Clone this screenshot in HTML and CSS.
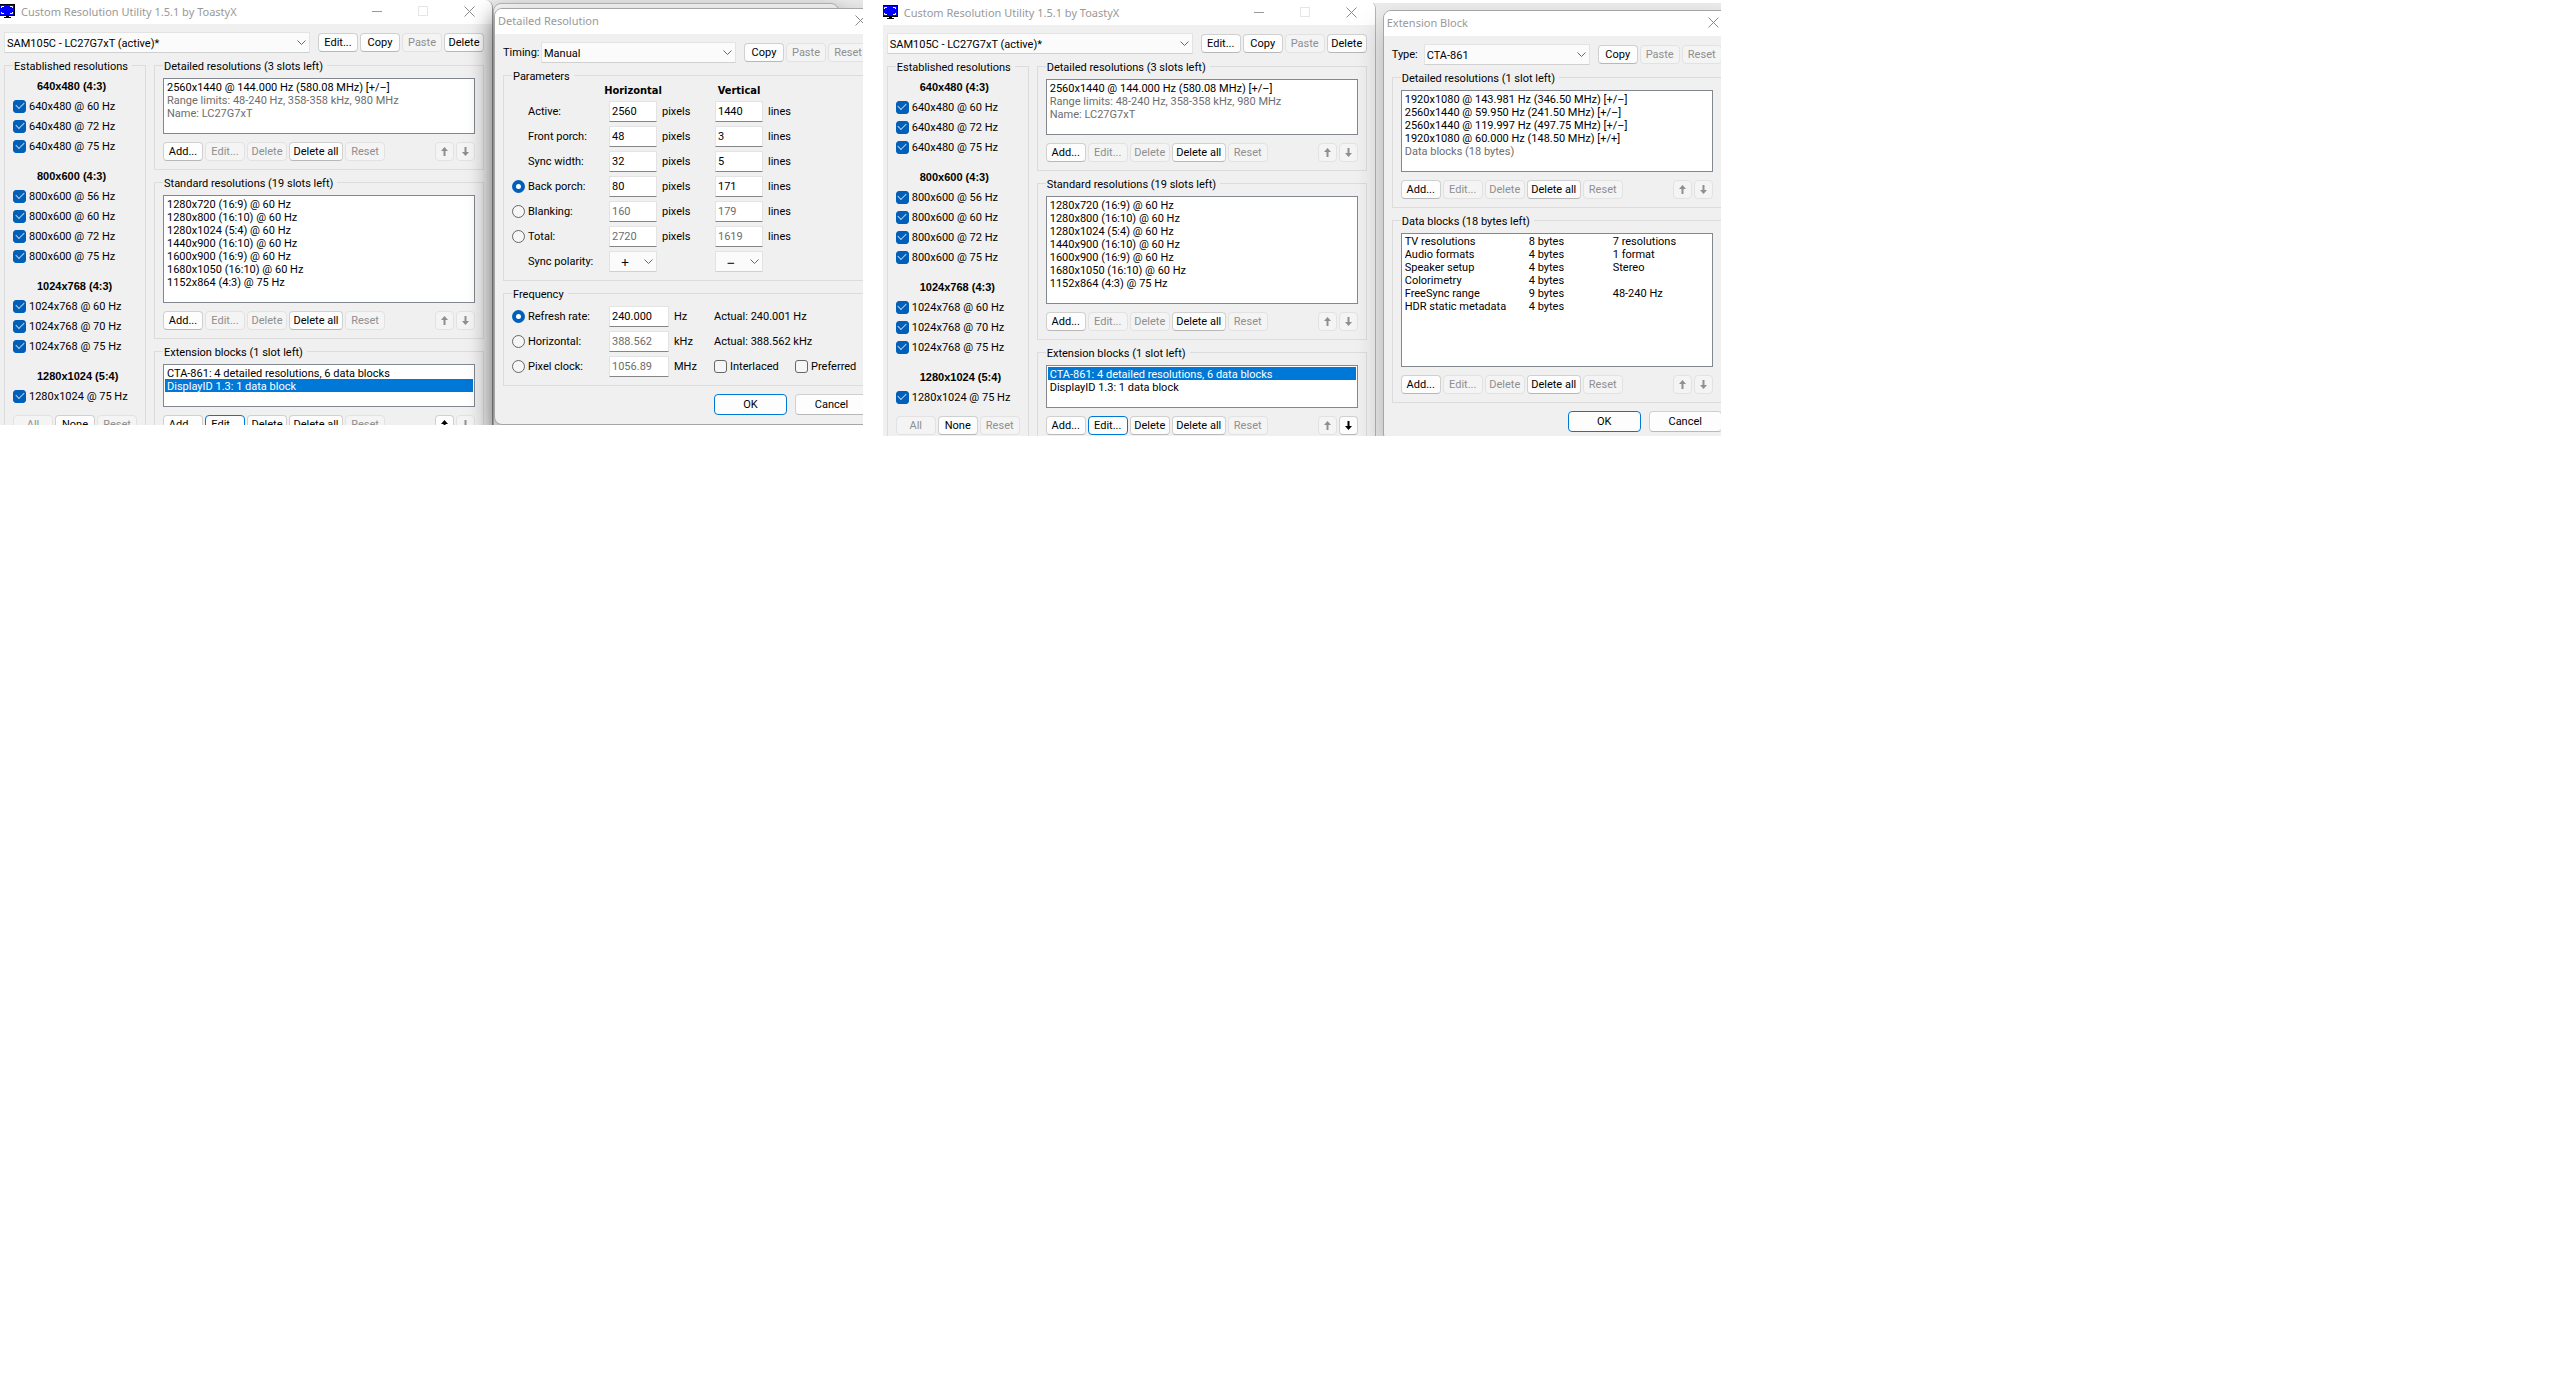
FILE: index.html
```html
<!DOCTYPE html>
<html lang="en">
<head>
    <meta charset="UTF-8">
    <meta name="viewport" content="width=device-width, initial-scale=1.0">
    <title>Custom Resolution Utility</title>
    <link rel="stylesheet" href="styles.css">
</head>
<body>
    <!-- shared icons -->
    <svg class="defs" aria-hidden="true">
        <symbol id="monitor" viewBox="0 0 15 14">
            <rect width="15" height="12" fill="#000"/>
            <rect x="0" y="1" width="14" height="10" fill="#00f"/>
            <path d="M1.500 4V2.500H4M10 2.500h2.500V4M1.500 8v1.500H4M10 9.500h2.500V8" fill="none" stroke="#fff"/>
            <path d="M6 12h3v1h2v1H4v-1h2z" fill="#000"/>
        </symbol>
        <symbol id="min" viewBox="0 0 11 11"><path d="M0 5.500h10" stroke="#999"/></symbol>
        <symbol id="max" viewBox="0 0 11 11"><rect x=".5" y=".5" width="9" height="9" fill="none" stroke="#e6e6e6"/></symbol>
        <symbol id="close" viewBox="0 0 11 11"><path d="M.5.5l10 10M10.500.5l-10 10" stroke="#8a8a8a"/></symbol>
        <symbol id="chevron" viewBox="0 0 9 5"><path d="M.5.5l4 4 4-4" fill="none" stroke="#666"/></symbol>
        <symbol id="up" viewBox="0 0 7 9"><path d="M3.500 0L7 4H4.500v5h-2V4H0z" fill="currentColor"/></symbol>
        <symbol id="down" viewBox="0 0 7 9"><path d="M3.500 9L0 5h2.500V0h2v5H7z" fill="currentColor"/></symbol>
    </svg>

    <div class="shots">
        <!-- left: detailed resolution dialog open -->
        <section class="shot shot-left">
            <div class="window main">
                <div class="titlebar">
                    <svg class="app-icon"><use href="#monitor"/></svg>
                    <h1>Custom Resolution Utility 1.5.1 by ToastyX</h1>
                    <button class="caption" aria-label="Minimize"><svg><use href="#min"/></svg></button>
                    <button class="caption" aria-label="Maximize" disabled><svg><use href="#max"/></svg></button>
                    <button class="caption" aria-label="Close"><svg><use href="#close"/></svg></button>
                </div>
                <div class="content">
                    <div class="toolbar">
                        <div class="combo"><select aria-label="Display"><option>SAM105C - LC27G7xT (active)*</option></select><svg><use href="#chevron"/></svg></div>
                        <div class="buttons"><button>Edit...</button><button>Copy</button><button disabled>Paste</button><button>Delete</button></div>
                    </div>
                    <div class="columns">
                        <fieldset class="established">
                            <legend>Established resolutions</legend>
                            <h2>640x480 (4:3)</h2>
                            <label><input type="checkbox" checked>640x480 @ 60 Hz</label>
                            <label><input type="checkbox" checked>640x480 @ 72 Hz</label>
                            <label><input type="checkbox" checked>640x480 @ 75 Hz</label>
                            <h2>800x600 (4:3)</h2>
                            <label><input type="checkbox" checked>800x600 @ 56 Hz</label>
                            <label><input type="checkbox" checked>800x600 @ 60 Hz</label>
                            <label><input type="checkbox" checked>800x600 @ 72 Hz</label>
                            <label><input type="checkbox" checked>800x600 @ 75 Hz</label>
                            <h2>1024x768 (4:3)</h2>
                            <label><input type="checkbox" checked>1024x768 @ 60 Hz</label>
                            <label><input type="checkbox" checked>1024x768 @ 70 Hz</label>
                            <label><input type="checkbox" checked>1024x768 @ 75 Hz</label>
                            <h2>1280x1024 (5:4)</h2>
                            <label><input type="checkbox" checked>1280x1024 @ 75 Hz</label>
                            <div class="buttons"><button disabled>All</button><button>None</button><button disabled>Reset</button></div>
                        </fieldset>
                        <div class="groups">
                            <fieldset>
                                <legend>Detailed resolutions (3 slots left)</legend>
                                <ul class="list rows-4">
                                    <li>2560x1440 @ 144.000 Hz (580.08 MHz) [+/–]</li>
                                    <li class="muted">Range limits: 48-240 Hz, 358-358 kHz, 980 MHz</li>
                                    <li class="muted">Name: LC27G7xT</li>
                                </ul>
                                <div class="buttons"><button>Add...</button><button disabled>Edit...</button><button disabled>Delete</button><button class="wide">Delete all</button><button disabled>Reset</button><button class="arrow first" aria-label="Move up" disabled><svg><use href="#up"/></svg></button><button class="arrow" aria-label="Move down" disabled><svg><use href="#down"/></svg></button></div>
                            </fieldset>
                            <fieldset>
                                <legend>Standard resolutions (19 slots left)</legend>
                                <ul class="list rows-8">
                                    <li>1280x720 (16:9) @ 60 Hz</li>
                                    <li>1280x800 (16:10) @ 60 Hz</li>
                                    <li>1280x1024 (5:4) @ 60 Hz</li>
                                    <li>1440x900 (16:10) @ 60 Hz</li>
                                    <li>1600x900 (16:9) @ 60 Hz</li>
                                    <li>1680x1050 (16:10) @ 60 Hz</li>
                                    <li>1152x864 (4:3) @ 75 Hz</li>
                                </ul>
                                <div class="buttons"><button>Add...</button><button disabled>Edit...</button><button disabled>Delete</button><button class="wide">Delete all</button><button disabled>Reset</button><button class="arrow first" aria-label="Move up" disabled><svg><use href="#up"/></svg></button><button class="arrow" aria-label="Move down" disabled><svg><use href="#down"/></svg></button></div>
                            </fieldset>
                            <fieldset>
                                <legend>Extension blocks (1 slot left)</legend>
                                <ul class="list rows-3">
                                    <li>CTA-861: 4 detailed resolutions, 6 data blocks</li>
                                    <li class="selected">DisplayID 1.3: 1 data block</li>
                                </ul>
                                <div class="buttons"><button>Add...</button><button class="default">Edit...</button><button>Delete</button><button class="wide">Delete all</button><button disabled>Reset</button><button class="arrow first" aria-label="Move up"><svg><use href="#up"/></svg></button><button class="arrow" aria-label="Move down" disabled><svg><use href="#down"/></svg></button></div>
                            </fieldset>
                        </div>
                    </div>
                </div>
            </div>

            <div class="backdrop"></div>

            <div class="window dialog">
                <div class="titlebar">
                    <h1>Detailed Resolution</h1>
                    <button class="caption" aria-label="Close"><svg><use href="#close"/></svg></button>
                </div>
                <div class="content">
                    <div class="toolbar">
                        <label class="timing-label" for="timing">Timing:</label>
                        <div class="combo timing"><select id="timing"><option>Manual</option></select><svg><use href="#chevron"/></svg></div>
                        <div class="buttons"><button>Copy</button><button disabled>Paste</button><button disabled>Reset</button></div>
                    </div>
                    <fieldset class="params">
                        <legend>Parameters</legend>
                        <div class="row head"><span></span><b>Horizontal</b><span></span><b>Vertical</b></div>
                        <div class="row"><label class="plain" for="active">Active:</label><input id="active" type="text" value="2560"><span>pixels</span><input type="text" value="1440" aria-label="Active lines"><span>lines</span></div>
                        <div class="row"><label class="plain" for="front">Front porch:</label><input id="front" type="text" value="48"><span>pixels</span><input type="text" value="3" aria-label="Front porch lines"><span>lines</span></div>
                        <div class="row"><label class="plain" for="sync">Sync width:</label><input id="sync" type="text" value="32"><span>pixels</span><input type="text" value="5" aria-label="Sync width lines"><span>lines</span></div>
                        <div class="row"><label><input type="radio" name="param" checked>Back porch:</label><input type="text" value="80" aria-label="Back porch pixels"><span>pixels</span><input type="text" value="171" aria-label="Back porch lines"><span>lines</span></div>
                        <div class="row"><label><input type="radio" name="param">Blanking:</label><input type="text" value="160" aria-label="Blanking pixels" disabled><span>pixels</span><input type="text" value="179" aria-label="Blanking lines" disabled><span>lines</span></div>
                        <div class="row"><label><input type="radio" name="param">Total:</label><input type="text" value="2720" aria-label="Total pixels" disabled><span>pixels</span><input type="text" value="1619" aria-label="Total lines" disabled><span>lines</span></div>
                        <div class="row">
                            <label class="plain" for="polarity">Sync polarity:</label>
                            <div class="combo sign"><select id="polarity"><option>+</option><option>−</option></select><svg><use href="#chevron"/></svg></div>
                            <span></span>
                            <div class="combo sign"><select aria-label="Vertical sync polarity"><option>−</option><option>+</option></select><svg><use href="#chevron"/></svg></div>
                        </div>
                    </fieldset>
                    <fieldset class="params frequency">
                        <legend>Frequency</legend>
                        <div class="row"><label><input type="radio" name="freq" checked>Refresh rate:</label><input type="text" value="240.000" aria-label="Refresh rate"><span>Hz</span><div>Actual: 240.001 Hz</div></div>
                        <div class="row"><label><input type="radio" name="freq">Horizontal:</label><input type="text" value="388.562" aria-label="Horizontal" disabled><span>kHz</span><div>Actual: 388.562 kHz</div></div>
                        <div class="row"><label><input type="radio" name="freq">Pixel clock:</label><input type="text" value="1056.89" aria-label="Pixel clock" disabled><span>MHz</span><div class="flags"><label><input type="checkbox">Interlaced</label><label><input type="checkbox">Preferred</label></div></div>
                    </fieldset>
                    <div class="actions"><button class="default">OK</button><button>Cancel</button></div>
                </div>
            </div>
        </section>

        <!-- right: extension block dialog open -->
        <section class="shot shot-right">
            <div class="window main">
                <div class="titlebar">
                    <svg class="app-icon"><use href="#monitor"/></svg>
                    <h1>Custom Resolution Utility 1.5.1 by ToastyX</h1>
                    <button class="caption" aria-label="Minimize"><svg><use href="#min"/></svg></button>
                    <button class="caption" aria-label="Maximize" disabled><svg><use href="#max"/></svg></button>
                    <button class="caption" aria-label="Close"><svg><use href="#close"/></svg></button>
                </div>
                <div class="content">
                    <div class="toolbar">
                        <div class="combo"><select aria-label="Display"><option>SAM105C - LC27G7xT (active)*</option></select><svg><use href="#chevron"/></svg></div>
                        <div class="buttons"><button>Edit...</button><button>Copy</button><button disabled>Paste</button><button>Delete</button></div>
                    </div>
                    <div class="columns">
                        <fieldset class="established">
                            <legend>Established resolutions</legend>
                            <h2>640x480 (4:3)</h2>
                            <label><input type="checkbox" checked>640x480 @ 60 Hz</label>
                            <label><input type="checkbox" checked>640x480 @ 72 Hz</label>
                            <label><input type="checkbox" checked>640x480 @ 75 Hz</label>
                            <h2>800x600 (4:3)</h2>
                            <label><input type="checkbox" checked>800x600 @ 56 Hz</label>
                            <label><input type="checkbox" checked>800x600 @ 60 Hz</label>
                            <label><input type="checkbox" checked>800x600 @ 72 Hz</label>
                            <label><input type="checkbox" checked>800x600 @ 75 Hz</label>
                            <h2>1024x768 (4:3)</h2>
                            <label><input type="checkbox" checked>1024x768 @ 60 Hz</label>
                            <label><input type="checkbox" checked>1024x768 @ 70 Hz</label>
                            <label><input type="checkbox" checked>1024x768 @ 75 Hz</label>
                            <h2>1280x1024 (5:4)</h2>
                            <label><input type="checkbox" checked>1280x1024 @ 75 Hz</label>
                            <div class="buttons"><button disabled>All</button><button>None</button><button disabled>Reset</button></div>
                        </fieldset>
                        <div class="groups">
                            <fieldset>
                                <legend>Detailed resolutions (3 slots left)</legend>
                                <ul class="list rows-4">
                                    <li>2560x1440 @ 144.000 Hz (580.08 MHz) [+/–]</li>
                                    <li class="muted">Range limits: 48-240 Hz, 358-358 kHz, 980 MHz</li>
                                    <li class="muted">Name: LC27G7xT</li>
                                </ul>
                                <div class="buttons"><button>Add...</button><button disabled>Edit...</button><button disabled>Delete</button><button class="wide">Delete all</button><button disabled>Reset</button><button class="arrow first" aria-label="Move up" disabled><svg><use href="#up"/></svg></button><button class="arrow" aria-label="Move down" disabled><svg><use href="#down"/></svg></button></div>
                            </fieldset>
                            <fieldset>
                                <legend>Standard resolutions (19 slots left)</legend>
                                <ul class="list rows-8">
                                    <li>1280x720 (16:9) @ 60 Hz</li>
                                    <li>1280x800 (16:10) @ 60 Hz</li>
                                    <li>1280x1024 (5:4) @ 60 Hz</li>
                                    <li>1440x900 (16:10) @ 60 Hz</li>
                                    <li>1600x900 (16:9) @ 60 Hz</li>
                                    <li>1680x1050 (16:10) @ 60 Hz</li>
                                    <li>1152x864 (4:3) @ 75 Hz</li>
                                </ul>
                                <div class="buttons"><button>Add...</button><button disabled>Edit...</button><button disabled>Delete</button><button class="wide">Delete all</button><button disabled>Reset</button><button class="arrow first" aria-label="Move up" disabled><svg><use href="#up"/></svg></button><button class="arrow" aria-label="Move down" disabled><svg><use href="#down"/></svg></button></div>
                            </fieldset>
                            <fieldset>
                                <legend>Extension blocks (1 slot left)</legend>
                                <ul class="list rows-3">
                                    <li class="selected">CTA-861: 4 detailed resolutions, 6 data blocks</li>
                                    <li>DisplayID 1.3: 1 data block</li>
                                </ul>
                                <div class="buttons"><button>Add...</button><button class="default">Edit...</button><button>Delete</button><button class="wide">Delete all</button><button disabled>Reset</button><button class="arrow first" aria-label="Move up" disabled><svg><use href="#up"/></svg></button><button class="arrow" aria-label="Move down"><svg><use href="#down"/></svg></button></div>
                            </fieldset>
                        </div>
                    </div>
                </div>
            </div>

            <div class="window dialog">
                <div class="titlebar">
                    <h1>Extension Block</h1>
                    <button class="caption" aria-label="Close"><svg><use href="#close"/></svg></button>
                </div>
                <div class="content">
                    <div class="toolbar">
                        <label class="type-label" for="type">Type:</label>
                        <div class="combo"><select id="type"><option>CTA-861</option></select><svg><use href="#chevron"/></svg></div>
                        <div class="buttons"><button>Copy</button><button disabled>Paste</button><button disabled>Reset</button></div>
                    </div>
                    <div class="groups">
                        <fieldset>
                            <legend>Detailed resolutions (1 slot left)</legend>
                            <ul class="list rows-6">
                                <li>1920x1080 @ 143.981 Hz (346.50 MHz) [+/–]</li>
                                <li>2560x1440 @ 59.950 Hz (241.50 MHz) [+/–]</li>
                                <li>2560x1440 @ 119.997 Hz (497.75 MHz) [+/–]</li>
                                <li>1920x1080 @ 60.000 Hz (148.50 MHz) [+/+]</li>
                                <li class="muted">Data blocks (18 bytes)</li>
                            </ul>
                            <div class="buttons"><button>Add...</button><button disabled>Edit...</button><button disabled>Delete</button><button class="wide">Delete all</button><button disabled>Reset</button><button class="arrow first" aria-label="Move up" disabled><svg><use href="#up"/></svg></button><button class="arrow" aria-label="Move down" disabled><svg><use href="#down"/></svg></button></div>
                        </fieldset>
                        <fieldset>
                            <legend>Data blocks (18 bytes left)</legend>
                            <div class="list rows-10">
                                <table>
                                    <tr><td>TV resolutions</td><td>8 bytes</td><td>7 resolutions</td></tr>
                                    <tr><td>Audio formats</td><td>4 bytes</td><td>1 format</td></tr>
                                    <tr><td>Speaker setup</td><td>4 bytes</td><td>Stereo</td></tr>
                                    <tr><td>Colorimetry</td><td>4 bytes</td><td></td></tr>
                                    <tr><td>FreeSync range</td><td>9 bytes</td><td>48-240 Hz</td></tr>
                                    <tr><td>HDR static metadata</td><td>4 bytes</td><td></td></tr>
                                </table>
                            </div>
                            <div class="buttons"><button>Add...</button><button disabled>Edit...</button><button disabled>Delete</button><button class="wide">Delete all</button><button disabled>Reset</button><button class="arrow first" aria-label="Move up" disabled><svg><use href="#up"/></svg></button><button class="arrow" aria-label="Move down" disabled><svg><use href="#down"/></svg></button></div>
                        </fieldset>
                    </div>
                    <div class="actions"><button class="default">OK</button><button>Cancel</button></div>
                </div>
            </div>
        </section>
    </div>
</body>
</html>
```
FILE: styles.css
```css
* {
    box-sizing: border-box;
}
body {
    margin: 0;
    background-color: #fff;
    color: #000;
    font-family: Roboto, sans-serif;
    font-size: 11px;
    line-height: 13px;
}
button, input, select {
    margin: 0;
    font: inherit;
    color: inherit;
}
h1, h2, ul {
    margin: 0;
    padding: 0;
    font-size: 11px;
}
.defs {
    display: none;
}

/* screenshots */
.shots {
    display: flex;
    align-items: flex-start;
    gap: 20px;
}
.shot {
    position: relative;
    display: flex;
    align-items: flex-start;
    overflow: hidden;
    background-color: #ececec;
}
.shot-left {
    width: 33.7%;
    height: 425px;
}
.shot-right {
    width: 32.75%;
    height: 433px;
    margin-top: 3px;
}

/* windows */
.window {
    flex: none;
    background-color: #f0f0f0;
}
.main {
    width: 493px;
    border-right: 1px solid #999;
    border-top-right-radius: 8px;
    overflow: hidden;
}
.dialog {
    position: relative;
    width: 383px;
    border: 1px solid #a6a6a6;
    border-radius: 8px;
    box-shadow: 0 14px 28px rgba(0, 0, 0, 0.4);
}
.shot-left .dialog {
    margin: 8px 0 0 1px;
}
.shot-right .main {
    margin-top: -2px;
    border-color: #b4b4b4;
}
.shot-right .dialog {
    width: 348px;
    margin: 7px 0 0 7px;
    box-shadow: 0 14px 28px rgba(0, 0, 0, 0.25);
}
/* edge of the window behind the dialog */
.backdrop {
    position: absolute;
    top: 3px;
    left: 493px;
    width: 346px;
    height: 440px;
    border: 1px solid #b4b4b4;
    border-radius: 8px;
    background-color: #f4f4f4;
    box-shadow: 0 8px 20px rgba(0, 0, 0, 0.3);
}
.titlebar {
    display: flex;
    align-items: center;
    height: 24px;
    padding-bottom: 2px;
    background-color: #fff;
    color: #999;
}
.dialog .titlebar {
    height: 25px;
    padding-left: 3px;
    border-radius: 7px 7px 0 0;
}
.titlebar h1 {
    flex: 1;
    font-family: "Noto Sans", sans-serif;
    font-weight: normal;
}
.app-icon {
    width: 15px;
    height: 14px;
    margin-right: 6px;
}
.titlebar .caption {
    display: flex;
    justify-content: center;
    align-items: center;
    width: 46px;
    height: 22px;
    border: none;
    background: none;
}
.dialog .caption {
    width: 32px;
}
.caption svg {
    width: 11px;
    height: 11px;
}
.content {
    padding: 8px 8px 9px;
}
.main .content {
    padding-left: 4px;
}

/* buttons and drop-downs */
.toolbar {
    display: flex;
    align-items: center;
    gap: 8px;
    height: 21px;
    margin-bottom: 6px;
}
.timing-label {
    width: 30px;
    white-space: nowrap;
}
.type-label {
    width: 24px;
    white-space: nowrap;
}
.buttons {
    display: flex;
    gap: 2px;
}
button {
    width: 40px;
    height: 19px;
    padding: 0;
    border: 1px solid #d0d0d0;
    border-bottom-color: #b8b8b8;
    border-radius: 4px;
    background-color: #fdfdfd;
    text-align: center;
}
button:disabled {
    border-color: #e2e2e2;
    background-color: #f4f4f4;
    color: #8f8f8f;
}
button.wide {
    width: 54px;
}
button.arrow {
    display: flex;
    justify-content: center;
    align-items: center;
    width: 19px;
}
button.first {
    margin-left: auto;
}
.arrow svg {
    width: 7px;
    height: 9px;
}
button.default {
    border-color: #0078d4;
}
.combo {
    position: relative;
    flex: 1;
    height: 21px;
}
.combo select {
    width: 100%;
    height: 21px;
    padding: 1px 2px 0;
    border: 1px solid #e3e3e3;
    border-bottom-color: #d0d0d0;
    border-radius: 1px;
    background-color: #fbfbfb;
    appearance: none;
}
.combo svg {
    position: absolute;
    top: 8px;
    right: 4px;
    width: 9px;
    height: 5px;
    pointer-events: none;
}
.combo.timing {
    flex: none;
    width: 195px;
}
.combo.sign select {
    padding-left: 11px;
    font-family: "Noto Sans", sans-serif;
    font-size: 14px;
}

/* groups */
.columns {
    display: flex;
    align-items: flex-start;
    gap: 8px;
}
.groups {
    flex: 1;
    display: flex;
    flex-direction: column;
    gap: 6px;
}
fieldset {
    min-width: 0;
    margin: 0;
    padding: 6px 8px 8px;
    border: 1px solid #dcdcdc;
}
legend {
    height: 13px;
    padding: 0 4px 0 1px;
    line-height: 15px;
}
.list {
    margin: 0 0 8px;
    padding: 1px;
    border: 1px solid #828790;
    background-color: #fff;
    list-style: none;
}
.list li {
    height: 13px;
    padding-left: 2px;
    line-height: 15px;
    white-space: nowrap;
}
.rows-3 { height: 43px; }
.rows-4 { height: 56px; }
.rows-6 { height: 82px; }
.rows-8 { height: 108px; }
.rows-10 { height: 134px; }
.list .muted {
    color: #6d6d6d;
}
.list .selected {
    background-color: #0078d7;
    color: #fff;
}
table {
    border-collapse: collapse;
}
td {
    height: 13px;
    padding: 0 0 0 2px;
}
td:nth-child(1) {
    width: 124px;
}
td:nth-child(2) {
    width: 84px;
}

/* established resolutions */
.established {
    width: 142px;
    padding-top: 4px;
}
.established h2 {
    height: 20px;
    padding-left: 24px;
    font-family: "Liberation Sans", sans-serif;
    line-height: 20px;
}
.established label + h2 {
    margin-top: 10px;
}
label {
    display: flex;
    align-items: center;
}
.established label {
    height: 20px;
}
.established .buttons {
    margin-top: 9px;
}
input[type="checkbox"],
input[type="radio"] {
    display: flex;
    justify-content: center;
    align-items: center;
    width: 13px;
    height: 13px;
    margin-right: 3px;
    border: 1px solid #666;
    border-radius: 3px;
    background-color: #f6f6f6;
    appearance: none;
}
input[type="checkbox"]:checked {
    border-color: #005fb8;
    background-color: #005fb8;
}
input[type="checkbox"]:checked::after {
    content: "";
    width: 7px;
    height: 4px;
    margin-bottom: 3px;
    border: solid #b9d4ee;
    border-width: 0 0 1px 1px;
    transform: rotate(-45deg);
}
input[type="radio"] {
    border-radius: 50%;
}
input[type="radio"]:checked {
    border: 4px solid #005fb8;
    background-color: #fff;
}

/* dialog form */
.params {
    padding: 0 8px 6px;
    margin-bottom: 6px;
}
.frequency {
    padding-top: 4px;
    margin-bottom: 8px;
}
.row {
    display: grid;
    grid-template-columns: 97px 48px 58px 48px 1fr;
    align-items: center;
    height: 25px;
}
.frequency .row {
    grid-template-columns: 97px 60px 45px 1fr;
}
.row.head {
    height: 17px;
}
.row b {
    justify-self: center;
    font-family: "DejaVu Sans Condensed", sans-serif;
}
.row span {
    padding-left: 5px;
}
.row .plain {
    padding-left: 16px;
}
.row input[type="text"] {
    width: 100%;
    height: 21px;
    padding: 0 2px;
    border: 1px solid #e3e3e3;
    border-bottom-color: #868686;
    border-radius: 1px;
    background-color: #fff;
}
.row input[type="text"]:disabled {
    color: #6d6d6d;
}
.flags {
    display: flex;
}
.flags label {
    width: 81px;
}
.actions {
    display: flex;
    justify-content: flex-end;
    gap: 8px;
    margin-top: 8px;
}
.actions button {
    width: 73px;
    height: 21px;
}
```
